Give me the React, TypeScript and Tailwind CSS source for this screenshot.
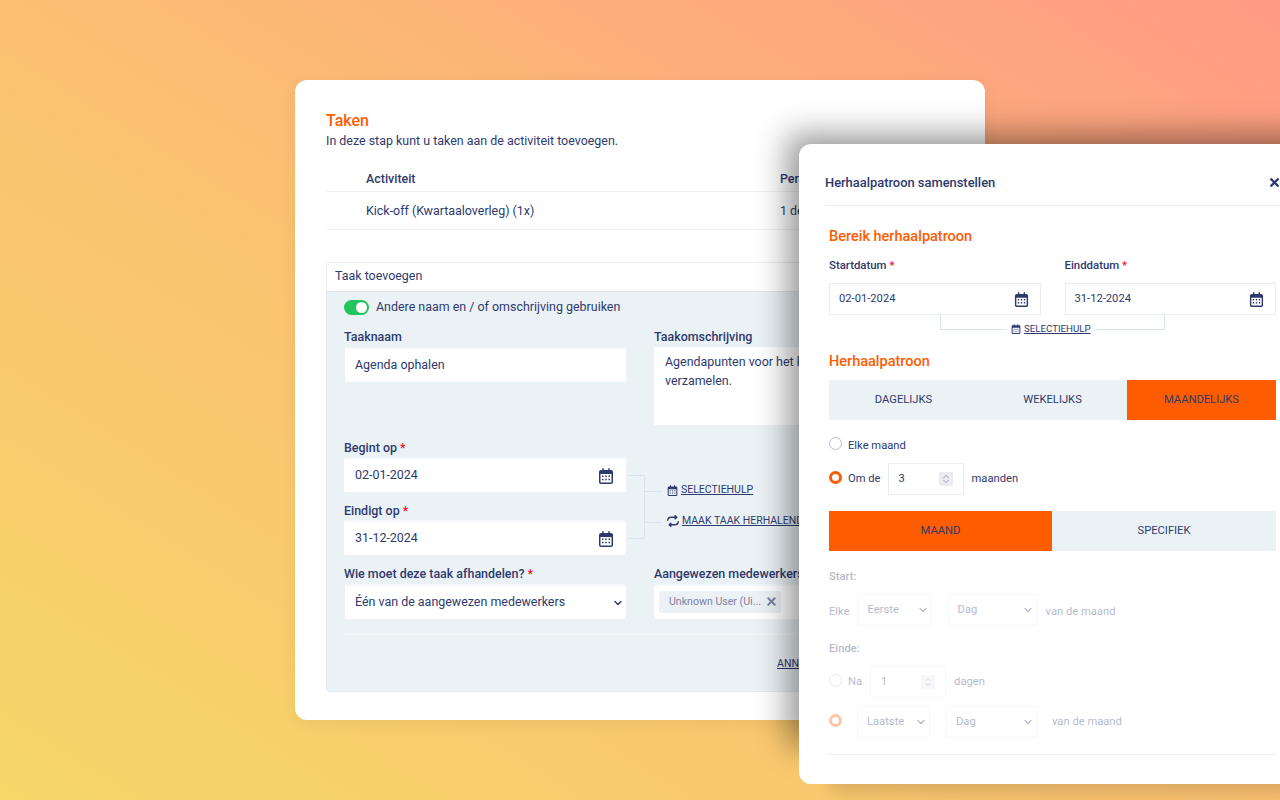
import { ChevronDown, ChevronUp, X } from 'lucide-react';
import { FaRepeat } from 'react-icons/fa6';

const Req = () => <span className="text-[#f0141e]"> *</span>;

const CalIcon = ({ size = 16 }: { size?: number }) => (
    <svg width={size} height={size} viewBox="0 0 448 512" fill="#2e3a6e">
        <path d="M128 0c13 0 24 11 24 24v40h144V24c0-13 11-24 24-24s24 11 24 24v40h40c35 0 64 29 64 64v320c0 35-29 64-64 64H64c-35 0-64-29-64-64V128c0-35 29-64 64-64h40V24c0-13 11-24 24-24zM48 192v256c0 9 7 16 16 16h320c9 0 16-7 16-16V192H48zm48 48h48v48H96v-48zm104 0h48v48h-48v-48zm104 0h48v48h-48v-48zM96 344h48v48H96v-48zm104 0h48v48h-48v-48zm104 0h48v48h-48v-48z" />
    </svg>
);

const SmallSelect = ({ label, className }: { label: string; className: string }) => (
    <div className={`h-8 border border-[#e9edf0] flex items-center justify-between pl-[9px] pr-[2px] ${className}`}>
        <span>{label}</span>
        <ChevronDown size={12} strokeWidth={2.5} />
    </div>
);

const NumberBox = ({ value, className }: { value: string; className: string }) => (
    <div className={`h-8 w-[76px] border border-[#e9edf0] flex items-center justify-between pl-2.5 pr-[10px] ${className}`}>
        <span>{value}</span>
        <span className="w-[14px] h-[14px] bg-[#ebebf0] flex flex-col items-center justify-center text-[#7d829f]">
            <ChevronUp size={10} className="-mb-[2px]" />
            <ChevronDown size={10} className="-mt-[2px]" />
        </span>
    </div>
);

const Radio = ({ checked }: { checked?: boolean }) =>
    checked ? (
        <span className="w-[13px] h-[13px] -mt-[3px] rounded-full border-[3px] border-[#ff5c00] bg-white shrink-0" />
    ) : (
        <span className="w-[13px] h-[13px] -mt-[3px] rounded-full border border-[#b9bdcc] bg-white shrink-0" />
    );

const App = () => {
    return (
        <div
            className="relative w-[1280px] h-[800px] overflow-hidden pt-20 pl-[295px] bg-[linear-gradient(to_top_right,#f6d768_0%,#fbc071_50%,#ff9a85_100%)] text-[#2e3a6e] text-[12.45px]"
            style={{ fontFamily: 'Roboto, sans-serif' }}
        >
            {/* Main card */}
            <div className="w-[690px] h-[640px] bg-white rounded-xl shadow-[0_4px_16px_rgba(0,0,0,0.06)] pl-[31px] pr-[29px] pt-[31px]">
                <h1 className="text-base leading-5 font-medium text-[#ff5c00]">Taken</h1>
                <p className="leading-4 mt-[2px]">In deze stap kunt u taken aan de activiteit toevoegen.</p>

                <div className="mt-[16px] border-b border-[#eef1f4] h-[27px] flex font-medium leading-[28px]">
                    <span className="ml-[40px] w-[414px]">Activiteit</span>
                    <span>Periode</span>
                </div>
                <div className="border-b border-[#eef1f4] h-[38px] flex leading-[37px]">
                    <span className="ml-[40px] w-[414px]">Kick-off (Kwartaaloverleg) (1x)</span>
                    <span>1 de</span>
                </div>

                <div className="mt-[32px] h-[430px] w-[630px] border border-[#e6ebef] rounded-[3px] overflow-hidden">
                    <div className="h-[29px] border-b border-[#dfe7ec] pl-[8px] leading-[26px] bg-white">Taak toevoegen</div>
                    <div className="h-full bg-[#ebf2f6] px-[17px] pt-[7px]">
                        <div className="flex items-center gap-[7px] h-4">
                            <span className="relative w-[25px] h-[15px] rounded-full bg-[#22c55e] shrink-0">
                                <span className="absolute right-[2px] top-[2px] w-[11px] h-[11px] rounded-full bg-white" />
                            </span>
                            <span>Andere naam en / of omschrijving gebruiken</span>
                        </div>

                        <div className="grid grid-cols-[282px_1fr] gap-x-[28px] mt-[15px]">
                            <div>
                                <div className="font-medium leading-[14px]">Taaknaam</div>
                                <div className="mt-[3px] h-[35px] bg-white border-t-2 border-[#f4f7f9] ml-px pl-[10px] flex items-center">Agenda ophalen</div>

                                <div className="mt-[59px] font-medium leading-[14px]">Begint op<Req /></div>
                                <div className="mt-[2px] h-[35px] bg-white border-t-2 border-[#f4f7f9] pl-[11px] pr-[12px] flex items-center justify-between"><span className="-mt-px">02-01-2024</span><CalIcon /></div>

                                <div className="mt-[12px] font-medium leading-[14px]">Eindigt op<Req /></div>
                                <div className="mt-[2px] h-[35px] bg-white border-t-2 border-[#f4f7f9] pl-[11px] pr-[12px] flex items-center justify-between"><span className="-mt-px">31-12-2024</span><CalIcon /></div>

                                <div className="mt-[12px] font-medium leading-[14px]">Wie moet deze taak afhandelen?<Req /></div>
                                <div className="mt-[3px] h-[35px] bg-white border-t-2 border-[#f4f7f9] ml-px pl-[10px] pr-[2px] flex items-center justify-between"><span className="-mt-px">Één van de aangewezen medewerkers</span><ChevronDown size={12} strokeWidth={3} /></div>
                            </div>

                            <div className="min-w-0">
                                <div className="font-medium leading-[14px]">Taakomschrijving</div>
                                <div className="mt-[3px] h-[78px] bg-white pl-[11px] pt-[5px] leading-[19px] whitespace-nowrap overflow-hidden">Agendapunten voor het kw<br />verzamelen.</div>

                                <div className="mt-[45px] relative h-[97px] text-[10.5px]">
                                    <div className="absolute -left-[27px] top-[5px] w-[18px] h-[64px] border border-l-0 border-[#d9e5ec]" />
                                    <div className="absolute -left-[9px] top-[21px] w-[17px] h-px bg-[#d9e5ec]" />
                                    <div className="absolute -left-[9px] top-[52px] w-[17px] h-px bg-[#d9e5ec]" />
                                    <div className="absolute left-[13px] top-[13px] flex items-center gap-[3px] leading-[14px]">
                                        <CalIcon size={11} />
                                        <span className="underline">SELECTIEHULP</span>
                                    </div>
                                    <div className="absolute left-[13px] top-[44px] flex items-center gap-[3px] leading-[14px]">
                                        <FaRepeat size={12} />
                                        <span className="underline whitespace-nowrap">MAAK TAAK HERHALEND</span>
                                    </div>
                                </div>

                                <div className="font-medium leading-[14px] whitespace-nowrap">Aangewezen medewerkers<Req /></div>
                                <div className="mt-[3px] h-[35px] bg-white border-t-2 border-[#f4f7f9] px-[5px] flex items-center">
                                    <span className="-mt-[2px] h-[22px] w-[122px] bg-[#ebf1f5] rounded-[3px] flex items-center justify-between pl-[10px] pr-[3px] text-[10.6px] text-[#7d829f]">
                                        Unknown User (Ui...
                                        <X size={13} strokeWidth={3.5} />
                                    </span>
                                </div>
                            </div>
                        </div>

                        <div className="mt-[14px] h-[2px] bg-[#f1f5f8]" />
                        <div className="mt-[21px] text-[10.6px]">
                            <span className="underline ml-[433px] block text-left">ANNULEREN</span>
                        </div>
                    </div>
                </div>
            </div>

            {/* Modal */}
            <div className="absolute left-[799px] top-[144px] w-[560px] h-[640px] bg-white rounded-l-xl shadow-[-26px_-24px_30px_-15px_rgba(0,0,0,0.42),30px_10px_16px_rgba(0,0,0,0.12)] text-[11.2px]">
                <div className="ml-[26px] mr-[78px] h-[62px] pt-[16px] border-b border-[#e9ecef] flex items-center justify-between">
                    <span className="font-medium text-[12.9px]">Herhaalpatroon samenstellen</span>
                    <X size={13} strokeWidth={4.5} />
                </div>

                <div className="pl-[30px] w-[477px]">
                    <h2 className="mt-[23px] text-[14.5px] leading-4 font-medium text-[#ff5c00]">Bereik herhaalpatroon</h2>

                    <div className="flex gap-[24px] mt-[13px]">
                        <div className="w-[212px]">
                            <div className="font-medium text-[11.4px] leading-[14px]">Startdatum<Req /></div>
                            <div className="mt-[11px] h-8 border border-[#e9edf0] pl-[9px] pr-[11px] flex items-center justify-between"><span>02-01-2024</span><CalIcon size={15} /></div>
                        </div>
                        <div className="w-[212px]">
                            <div className="font-medium text-[11.4px] leading-[14px]">Einddatum<Req /></div>
                            <div className="mt-[11px] h-8 border border-[#e9edf0] pl-[9px] pr-[11px] flex items-center justify-between"><span>31-12-2024</span><CalIcon size={15} /></div>
                        </div>
                    </div>

                    <div className="relative h-[15px] ml-[111px] w-[225px] border border-t-0 border-[#d9e5ec]">
                        <div className="absolute left-[65px] top-[7px] bg-white px-[5px] flex items-center gap-[3px] text-[9.7px] leading-[14px]">
                            <CalIcon size={10} />
                            <span className="underline">SELECTIEHULP</span>
                        </div>
                    </div>

                    <h2 className="mt-[24px] text-[14.5px] leading-4 font-medium text-[#ff5c00]">Herhaalpatroon</h2>

                    <div className="mt-[10px] grid grid-cols-3 h-10 bg-[#ebf2f6]">
                        <div className="flex items-center justify-center">DAGELIJKS</div>
                        <div className="flex items-center justify-center">WEKELIJKS</div>
                        <div className="flex items-center justify-center bg-[#ff5c00]">MAANDELIJKS</div>
                    </div>

                    <div className="mt-[17px] flex items-center gap-[6px] h-[15px]"><Radio /><span className="mt-[4px]">Elke maand</span></div>

                    <div className="mt-[11px] flex items-center">
                        <Radio checked />
                        <span className="ml-[6px]">Om de</span>
                        <NumberBox value="3" className="ml-[7px]" />
                        <span className="ml-[8px]">maanden</span>
                    </div>

                    <div className="mt-4 grid grid-cols-[223px_1fr] h-10 bg-[#ebf2f6]">
                        <div className="flex items-center justify-center bg-[#ff5c00]">MAAND</div>
                        <div className="flex items-center justify-center">SPECIFIEK</div>
                    </div>

                    {/* greyed out part */}
                    <div className="opacity-35">
                        <div className="mt-[19px] font-medium leading-[14px]">Start:</div>
                        <div className="mt-[10px] flex items-center">
                            <span className="mt-[4px]">Elke</span>
                            <SmallSelect label="Eerste" className="ml-[8px] w-[74px]" />
                            <SmallSelect label="Dag" className="ml-[16px] w-[89px]" />
                            <span className="ml-[9px] mt-[4px]">van de maand</span>
                        </div>
                        <div className="mt-[16px] font-medium leading-[14px]">Einde:</div>
                        <div className="mt-[10px] flex items-center">
                            <Radio />
                            <span className="ml-[6px]">Na</span>
                            <NumberBox value="1" className="ml-2 w-[75px]" />
                            <span className="ml-2">dagen</span>
                        </div>
                        <div className="mt-2 flex items-center">
                            <Radio checked />
                            <SmallSelect label="Laatste" className="ml-[15px] w-[73px]" />
                            <SmallSelect label="Dag" className="ml-[16px] w-[91px]" />
                            <span className="ml-[15px]">van de maand</span>
                        </div>
                    </div>
                    <div className="mt-4 h-px bg-[#eef2f5]" />
                </div>
            </div>
        </div>
    );
};

export default App;
